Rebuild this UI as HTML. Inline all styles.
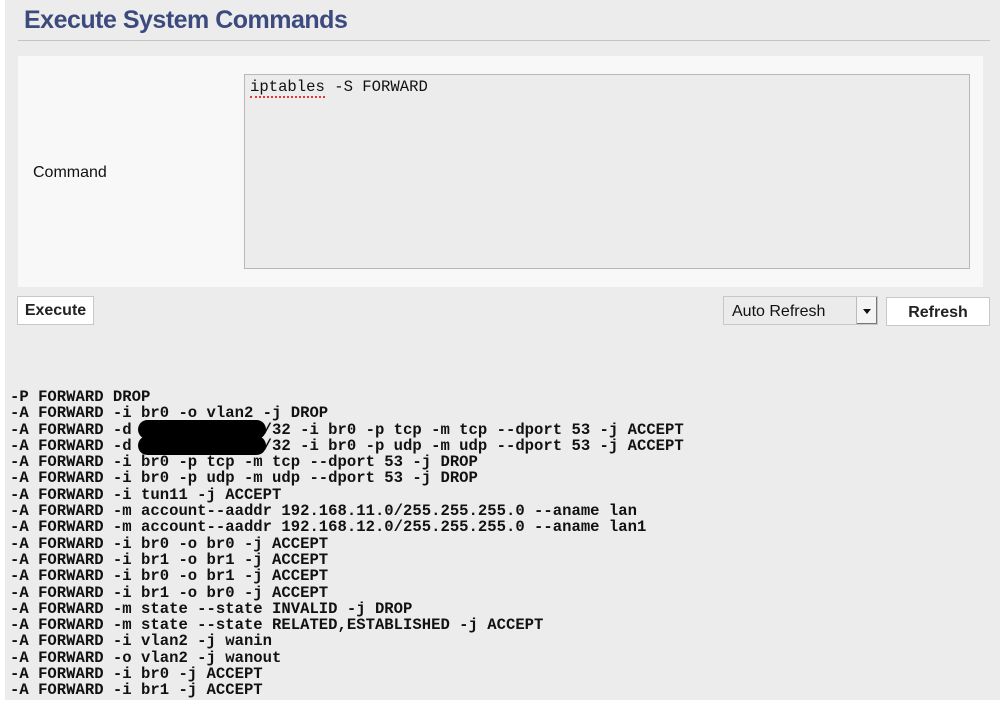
<!DOCTYPE html>
<html><head><style>
html,body{margin:0;padding:0;}
body{width:1000px;height:703px;background:#fff;position:relative;overflow:hidden;font-family:"Liberation Sans",sans-serif;}
.bg{position:absolute;left:5px;top:0;width:995px;height:700px;background:#ececec;}
h1{position:absolute;left:24px;top:6px;margin:0;font-size:25px;font-weight:bold;color:#3c4a7e;letter-spacing:-0.5px;}
.line{position:absolute;left:18px;top:40px;width:972px;height:1px;background:#c4c4c4;}
.panel{position:absolute;left:18px;top:56px;width:965px;height:231px;background:#f8f8f8;}
.lbl{position:absolute;left:33px;top:164px;font-size:16px;color:#111;}
.ta{position:absolute;left:244px;top:74px;width:724px;height:193px;border:1px solid #b8b8b8;background:#ececec;}
.mono{font-family:"Liberation Mono",monospace;font-size:15.6px;font-weight:bold;color:#111;}
.ta .mono{position:absolute;left:5px;top:3px;font-weight:normal;}
.sq{border-bottom:2px dotted #e33;}
.btn{position:absolute;background:#fff;border:1px solid #c8c8c8;font-weight:bold;font-size:16px;color:#222;text-align:center;box-sizing:border-box;}
.sel{position:absolute;left:723px;top:296px;width:155px;height:29px;border:1px solid #c8c8c8;box-sizing:border-box;background:#ebebeb;font-size:16px;color:#111;}
.sel span{position:absolute;left:8px;top:6px;}
.sel .arr{position:absolute;right:0;top:0;width:20px;height:27px;border-left:1px solid #bbb;background:#f4f4f4;box-shadow:inset -1px -1px 0 #777;}
.sel .arr:after{content:"";position:absolute;left:6px;top:12px;border-left:4px solid transparent;border-right:4px solid transparent;border-top:5px solid #111;}
pre{position:absolute;left:10px;top:389px;margin:0;line-height:16.3px;}
.blk{position:absolute;background:#000;border-radius:12px;height:19px;}
</style></head><body>
<div class="bg"></div>
<h1>Execute System Commands</h1>
<div class="line"></div>
<div class="panel"></div>
<div class="lbl">Command</div>
<div class="ta"><div class="mono"><span class="sq">iptables</span> -S FORWARD</div></div>
<div class="btn" style="left:17px;top:296px;width:77px;height:29px;line-height:28px;">Execute</div>
<div class="sel"><span>Auto Refresh</span><div class="arr"></div></div>
<div class="btn" style="left:886px;top:297px;width:104px;height:29px;line-height:29px;">Refresh</div>
<pre class="mono">-P FORWARD DROP
-A FORWARD -i br0 -o vlan2 -j DROP
-A FORWARD -d              /32 -i br0 -p tcp -m tcp --dport 53 -j ACCEPT
-A FORWARD -d              /32 -i br0 -p udp -m udp --dport 53 -j ACCEPT
-A FORWARD -i br0 -p tcp -m tcp --dport 53 -j DROP
-A FORWARD -i br0 -p udp -m udp --dport 53 -j DROP
-A FORWARD -i tun11 -j ACCEPT
-A FORWARD -m account--aaddr 192.168.11.0/255.255.255.0 --aname lan
-A FORWARD -m account--aaddr 192.168.12.0/255.255.255.0 --aname lan1
-A FORWARD -i br0 -o br0 -j ACCEPT
-A FORWARD -i br1 -o br1 -j ACCEPT
-A FORWARD -i br0 -o br1 -j ACCEPT
-A FORWARD -i br1 -o br0 -j ACCEPT
-A FORWARD -m state --state INVALID -j DROP
-A FORWARD -m state --state RELATED,ESTABLISHED -j ACCEPT
-A FORWARD -i vlan2 -j wanin
-A FORWARD -o vlan2 -j wanout
-A FORWARD -i br0 -j ACCEPT
-A FORWARD -i br1 -j ACCEPT</pre>
<div class="blk" style="left:138px;top:420px;width:128px;"></div>
<div class="blk" style="left:138px;top:436px;width:128px;"></div>
</body></html>
